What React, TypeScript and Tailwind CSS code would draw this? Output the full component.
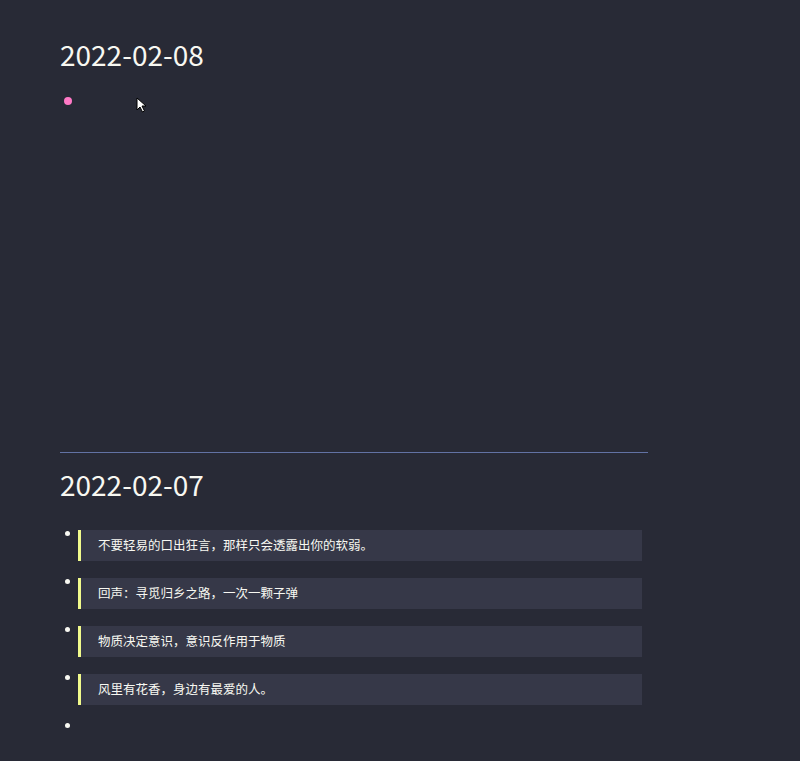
import React from 'react';

const quotes = [
  '不要轻易的口出狂言，那样只会透露出你的软弱。',
  '回声：寻觅归乡之路，一次一颗子弹',
  '物质决定意识，意识反作用于物质',
  '风里有花香，身边有最爱的人。',
];

const Cursor = () => (
  <svg width="12" height="17" viewBox="0 0 12 17" className="absolute left-[136px] top-[97px]">
    <path d="M1 1 L1 13 L4 10 L6.5 15 L8.5 14 L6 9 L10 9 Z" fill="#ffffff" stroke="#000000" strokeWidth="1" strokeLinejoin="round" />
  </svg>
);

export default function App() {
  return (
    <div
      className="relative min-h-[761px] w-full bg-[#282a36] text-[#f8f8f2]"
      style={{ fontFamily: '"Noto Sans CJK SC", "Noto Sans", sans-serif' }}
    >
      <div className="w-[648px] pl-[60px] pt-[34px]">
        <h1 className="text-[28px] leading-[40px] font-normal">2022-02-08</h1>
        <ul className="mt-[15px]">
          <li className="flex h-[24px] items-center">
            <span className="ml-[4px] h-[8px] w-[8px] rounded-full bg-[#ff79c6]" />
          </li>
        </ul>

        <hr className="mt-[339px] border-0 border-t border-[#6272a4]" />

        <h1 className="mt-[11px] text-[28px] leading-[40px] font-normal">2022-02-07</h1>
        <ul className="mt-[26px] flex flex-col gap-[17px]">
          {quotes.map(q => (
            <li key={q} className="flex items-start">
              <span className="ml-[5px] mt-[1px] h-[5px] w-[5px] shrink-0 rounded-full bg-[#f8f8f2]" />
              <blockquote className="ml-[8px] mr-[6px] flex h-[31px] flex-1 items-center border-l-[3px] border-[#f1fa8c] bg-[#363848] pl-[17px] text-[12.5px] text-[#f8f8f2]">
                {q}
              </blockquote>
            </li>
          ))}
          <li className="flex items-start">
            <span className="ml-[5px] mt-[1px] h-[5px] w-[5px] shrink-0 rounded-full bg-[#f8f8f2]" />
          </li>
        </ul>
      </div>
      <Cursor />
    </div>
  );
}
